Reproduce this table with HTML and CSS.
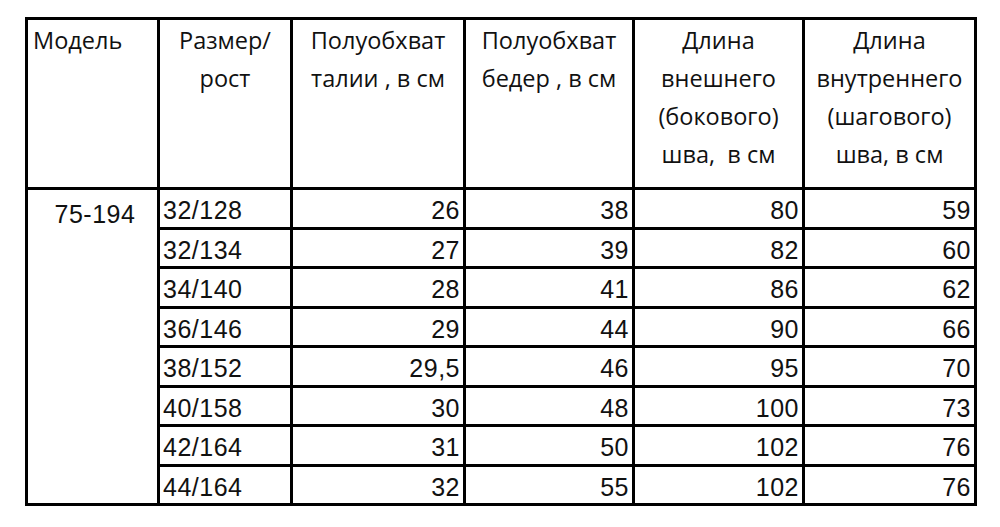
FILE: index.html
```html
<!DOCTYPE html>
<html lang="ru">
<head>
<meta charset="utf-8">
<title>Размерная таблица</title>
<link rel="stylesheet" href="styles.css">
</head>
<body>
<table class="sizes">
  <colgroup>
    <col class="c-model">
    <col class="c-size">
    <col class="c-waist">
    <col class="c-hips">
    <col class="c-outer">
    <col class="c-inner">
  </colgroup>
  <thead>
    <tr class="head-row">
      <th class="h-left">Модель</th>
      <th>Размер/<br>рост</th>
      <th>Полуобхват<br>талии , в см</th>
      <th>Полуобхват<br>бедер , в см</th>
      <th>Длина<br>внешнего<br>(бокового)<br>шва,&nbsp; в см</th>
      <th>Длина<br>внутреннего<br>(шагового)<br>шва, в см</th>
    </tr>
  </thead>
  <tbody>
    <tr><td class="model" rowspan="8">75-194</td><td class="size">32/128</td><td>26</td><td>38</td><td>80</td><td>59</td></tr>
    <tr><td class="size">32/134</td><td>27</td><td>39</td><td>82</td><td>60</td></tr>
    <tr><td class="size">34/140</td><td>28</td><td>41</td><td>86</td><td>62</td></tr>
    <tr><td class="size">36/146</td><td>29</td><td>44</td><td>90</td><td>66</td></tr>
    <tr><td class="size">38/152</td><td>29,5</td><td>46</td><td>95</td><td>70</td></tr>
    <tr><td class="size">40/158</td><td>30</td><td>48</td><td>100</td><td>73</td></tr>
    <tr><td class="size">42/164</td><td>31</td><td>50</td><td>102</td><td>76</td></tr>
    <tr><td class="size">44/164</td><td>32</td><td>55</td><td>102</td><td>76</td></tr>
  </tbody>
</table>
</body>
</html>
```
FILE: styles.css
```css
html, body {
  margin: 0;
  padding: 0;
  background: #fff;
}

body {
  padding: 17px 0 0 25px;
}

.sizes {
  border-collapse: collapse;
  table-layout: fixed;
  width: 949px;
  color: #111;
}

.c-model { width: 132px; }
.c-size  { width: 133px; }
.c-waist { width: 173px; }
.c-hips  { width: 169px; }
.c-outer { width: 170px; }
.c-inner { width: 172px; }

.sizes th,
.sizes td {
  border: 3px solid #000;
}

.head-row {
  height: 170px;
}

.sizes th {
  font-family: "Open Sans", "Noto Sans", sans-serif;
  font-weight: 400;
  font-size: 23.5px;
  line-height: 38px;
  text-align: center;
  vertical-align: top;
  padding: 1px 0 0;
  white-space: nowrap;
}

.sizes th.h-left {
  text-align: left;
  padding-left: 5px;
}

.sizes tbody tr {
  height: 39.5px;
}

.sizes td {
  font-family: "Liberation Sans", Arial, sans-serif;
  font-size: 25px;
  letter-spacing: 0.5px;
  line-height: 28px;
  text-align: right;
  vertical-align: middle;
  padding: 4px 3px 0 2px;
}

.sizes td.size {
  text-align: left;
  padding-left: 3px;
}

.sizes td.model {
  text-align: center;
  vertical-align: top;
  padding-top: 10px;
  padding-left: 8px;
}
```
